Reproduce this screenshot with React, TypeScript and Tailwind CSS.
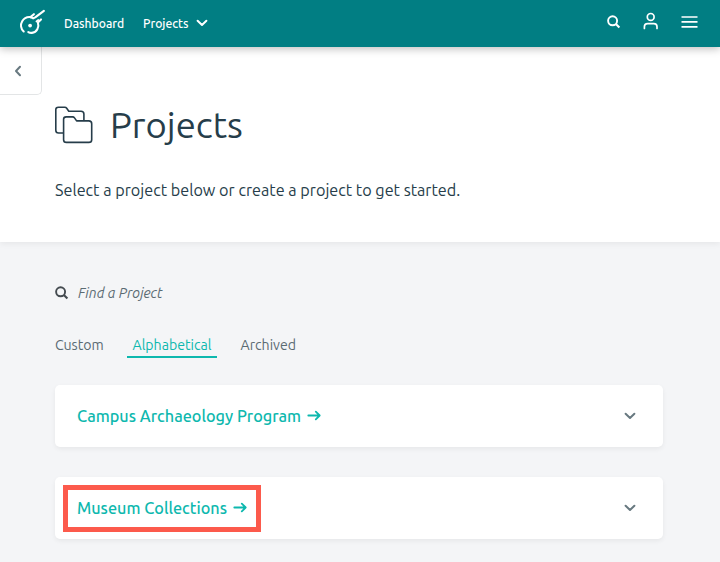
import React from "react";

type IconProps = { className?: string };

const Logo = () => (
  <svg width="28" height="28" viewBox="18 8 28 28" fill="none" stroke="#fff" strokeWidth="2.1" strokeLinecap="round" strokeLinejoin="round">
    <path d="M23.7 31.5C20.7 28.7 20.3 24.5 22.2 21.3C24 18.2 27.2 16.8 30.4 17.1L33.9 14.2" />
    <path d="M30.4 17.1L33.1 18.4L35.2 17.4L43.9 10.9" />
    <path d="M41 19.4L37.9 22.5C39.5 27.2 36.8 32.4 31.9 32.9C30.3 33 29.2 32.6 28.3 32.1" />
    <path d="M36.4 21.5L38.3 20" strokeWidth="1.7" />
    <circle cx="30.1" cy="25.6" r="1.9" fill="#fff" stroke="none" />
  </svg>
);

const Search = ({ className }: IconProps) => (
  <svg className={className} width="14" height="14" viewBox="0 0 14 14" fill="none" stroke="currentColor" strokeWidth="1.9">
    <circle cx="5.6" cy="5.8" r="4.5" />
    <path d="M8.9 9.1L12.4 12.6" strokeWidth="2.1" />
  </svg>
);

const Folders = () => (
  <svg width="39" height="38" viewBox="0 0 39 38" fill="none" stroke="#263d4a" strokeWidth="1.6" strokeLinejoin="round">
    <path d="M8.4 27H3.6Q.8 27 .8 24.2V3.6Q.8 1.2 3.4 1.2H9.8Q11 1.2 11.7 2.2L13.8 5.2H26Q28.9 5.2 28.9 8V14.3" />
    <path d="M8.6 13.3Q8.6 10.9 11.2 10.9H17.6Q18.8 10.9 19.5 11.9L21.6 14.9H33.8Q36.7 14.9 36.7 17.7V33.7Q36.7 36.4 33.8 36.4H11.4Q8.6 36.4 8.6 33.7Z" />
  </svg>
);

const Chevron = ({ className }: IconProps) => (
  <svg className={className} width="12" height="8" viewBox="0 0 12 8" fill="none" stroke="currentColor" strokeWidth="2" strokeLinecap="round" strokeLinejoin="round">
    <path d="M1.6 1.8L6 6L10.4 1.8" />
  </svg>
);

const Arrow = () => (
  <svg width="14" height="12" viewBox="0 0 14 12" fill="none" stroke="currentColor" strokeWidth="1.8" strokeLinecap="round" strokeLinejoin="round">
    <path d="M1.3 5.5H12.7M8.8 1.6L12.7 5.5L8.8 9.4" />
  </svg>
);

type CardProps = { title: string; marked?: boolean };

const ProjectCard = ({ title, marked }: CardProps) => (
  <article className="flex h-[62px] items-center justify-between rounded-[5px] bg-white pr-[27px] pl-2 shadow-[0_2px_5px_rgba(0,0,0,0.06)]">
    <a className={`mt-px flex h-[47px] items-center gap-[6px] border-5 pr-[9px] pb-[2px] pl-[9px] text-[16.24px] leading-6 font-medium text-[#0db8ae] ${marked ? "border-[#fc5a4c]" : "border-transparent"}`}>
      <span className="whitespace-nowrap">{title}</span>
      <Arrow />
    </a>
    <Chevron className="text-[#687980]" />
  </article>
);

export default function App() {
  return (
    <div className="h-[562px] w-[720px] overflow-hidden bg-[#f4f5f7] font-['Ubuntu','Noto_Sans',sans-serif] text-[#263d4a]">
      <header className="relative z-10 flex h-[47px] items-center bg-[#017e83] pr-[22px] pl-[18px] text-white shadow-[0_2px_8px_rgba(0,0,0,0.25)]">
        <div className="-mt-[3px]"><Logo /></div>
        <nav className="ml-[18px] flex items-center text-[12.15px] leading-[18px] font-medium">
          <span className="w-[79px]">Dashboard</span>
          <span className="w-[53px]">Projects</span>
          <Chevron className="-mt-[2px]" />
        </nav>
        <div className="ml-auto flex items-center">
          <Search className="-mt-[3px]" />
          <svg className="-mt-[5px] ml-[22px]" width="16" height="18" viewBox="0 0 16 18" fill="none" stroke="currentColor" strokeWidth="1.7" strokeLinecap="round">
            <circle cx="7.7" cy="4.9" r="3.4" />
            <path d="M1.4 16.5V14.8Q1.4 11.6 4.6 11.6H10.8Q14 11.6 14 14.8V16.5" />
          </svg>
          <svg className="-mt-[3px] ml-[21px]" width="18" height="14" viewBox="0 0 18 14" fill="none" stroke="currentColor" strokeWidth="1.7">
            <path d="M1.5 2H17.5M1.5 6.9H17.5M1.5 11.8H17.5" />
          </svg>
        </div>
      </header>
      <section className="h-[195px] bg-white shadow-[0_2px_6px_rgba(0,0,0,0.06)]">
        <button className="flex h-12 w-[42px] items-center justify-center rounded-br-[5px] border-r border-b border-[#e3e5e6] pr-[6px] text-[#687980]">
          <svg width="8" height="12" viewBox="0 0 8 12" fill="none" stroke="currentColor" strokeWidth="2" strokeLinecap="round" strokeLinejoin="round">
            <path d="M6 1.8L2 6L6 10.2" />
          </svg>
        </button>
        <div className="mt-[4px] flex h-[52px] items-center gap-4 pl-[55px]">
          <Folders />
          <h1 className="text-[36.4px] leading-[52px]">Projects</h1>
        </div>
        <p className="mt-[27px] pl-[55px] text-[16.2px] leading-6 whitespace-nowrap">Select a project below or create a project to get started.</p>
      </section>
      <main className="w-[663px] pl-[55px]">
        <label className="mt-[39px] flex h-6 items-center gap-[9px] text-[#444b50]">
          <Search />
          <span className="text-[14.1px] leading-5 text-[#5b6b73] italic">Find a Project</span>
        </label>
        <nav className="mt-[29px] flex h-[24px] text-[14.15px] leading-[22px] text-[#5b6b73]">
          <span className="w-[72px]">Custom</span>
          <span className="w-[90px] border-b-2 border-[#0db8ae] text-center text-[#0db8ae]">Alphabetical</span>
          <span className="ml-[23.5px]">Archived</span>
        </nav>
        <div className="mt-[27px] grid gap-[30px]">
          <ProjectCard title="Campus Archaeology Program" />
          <ProjectCard title="Museum Collections" marked />
        </div>
      </main>
    </div>
  );
}
